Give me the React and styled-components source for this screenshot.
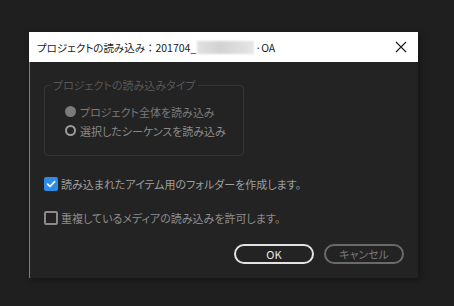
import React from "react";
import styled, { createGlobalStyle } from "styled-components";

const GlobalStyle = createGlobalStyle`
  html, body {
    margin: 0;
    padding: 0;
    background: #1f1f1f;
  }
  body {
    font-family: "Noto Sans CJK JP", "Noto Sans", sans-serif;
    font-feature-settings: "palt";
  }
`;

function CloseIcon() {
  return (
    <svg width="12" height="12" viewBox="0 0 12 12">
      <path d="M1 1 L11 11 M11 1 L1 11" stroke="#1b1b1b" strokeWidth="1.1" fill="none" />
    </svg>
  );
}

function CheckIcon() {
  return (
    <svg width="10" height="10" viewBox="0 0 10 10">
      <path d="M1.6 5.2 L4 7.5 L8.6 2.6" stroke="#fff" strokeWidth="1.7" fill="none" strokeLinecap="round" strokeLinejoin="round" />
    </svg>
  );
}

export default function App() {
  return (
    <Page>
      <GlobalStyle />
      <Dialog>
        <TitleBar>
          <Title>
            プロジェクトの読み込み<Colon>：</Colon>201704_
            <Redacted />
            ·OA
          </Title>
          <CloseButton>
            <CloseIcon />
          </CloseButton>
        </TitleBar>

        <Body>
          <Group>
            <Legend>プロジェクトの読み込みタイプ</Legend>
            <RadioList>
              <RadioRow>
                <Radio filled />
                <RadioLabel>プロジェクト全体を読み込み</RadioLabel>
              </RadioRow>
              <RadioRow>
                <Radio />
                <RadioLabel light>選択したシーケンスを読み込み</RadioLabel>
              </RadioRow>
            </RadioList>
          </Group>

          <CheckRow>
            <Checkbox checked>
              <CheckIcon />
            </Checkbox>
            <CheckLabel>読み込まれたアイテム用のフォルダーを作成します。</CheckLabel>
          </CheckRow>
          <CheckRow second>
            <Checkbox />
            <CheckLabel dim>重複しているメディアの読み込みを許可します。</CheckLabel>
          </CheckRow>

          <Buttons>
            <Button primary>OK</Button>
            <Button>キャンセル</Button>
          </Buttons>
        </Body>
      </Dialog>
    </Page>
  );
}

const Page = styled.div`
  width: 454px;
  height: 306px;
  padding: 32px 0 0 29px;
  box-sizing: border-box;
`;

const Dialog = styled.div`
  width: 389px;
  display: flex;
  flex-direction: column;
  box-shadow: 2px 2px 6px rgba(0, 0, 0, 0.35);
`;

const TitleBar = styled.div`
  height: 30px;
  background: #ffffff;
  display: flex;
  align-items: center;
  justify-content: space-between;
  padding: 0 10px 0 8px;
`;

const Title = styled.div`
  font-size: 10.5px;
  color: #1b1b1b;
  display: flex;
  align-items: center;
  white-space: nowrap;
`;

const Colon = styled.span`
  font-feature-settings: normal;
`;

const Redacted = styled.span`
  display: inline-block;
  width: 57px;
  height: 13px;
  margin: 0 1px;
  background: linear-gradient(90deg, #e2e2e2, #d2d2d2 40%, #dcdcdc 70%, #e6e6e6);
  filter: blur(1.2px);
`;

const CloseButton = styled.div`
  display: flex;
  align-items: center;
  justify-content: center;
  width: 14px;
  height: 14px;
`;

const Body = styled.div`
  background: #232323;
  border-left: 1px solid #7c7c7c;
  padding: 16px 14px 14px 14px;
  display: flex;
  flex-direction: column;
`;

const Group = styled.fieldset`
  width: 200px;
  height: 78px;
  box-sizing: border-box;
  margin: 0;
  padding: 0;
  border: 1px solid #363636;
  border-radius: 4px;
`;

const Legend = styled.legend`
  font-size: 11px;
  line-height: 14px;
  color: #575757;
  padding: 0 2px;
  margin-left: 6px;
`;

const RadioList = styled.div`
  padding: 10px 0 0 20px;
  display: flex;
  flex-direction: column;
`;

const RadioRow = styled.div`
  height: 19px;
  display: flex;
  align-items: center;
`;

const Radio = styled.span`
  width: 11px;
  height: 11px;
  border-radius: 50%;
  box-sizing: border-box;
  background: ${(p) => (p.filled ? "#7b7b7b" : "transparent")};
  border: 2px solid ${(p) => (p.filled ? "#7b7b7b" : "#9c9c9c")};
  margin-right: 4px;
  flex: none;
`;

const RadioLabel = styled.span`
  font-size: 11px;
  color: ${(p) => (p.light ? "#8a8a8a" : "#7a7a7a")};
  white-space: nowrap;
`;

const CheckRow = styled.div`
  height: 19px;
  display: flex;
  align-items: center;
  margin-top: ${(p) => (p.second ? "15px" : "18px")};
`;

const Checkbox = styled.span`
  width: 14px;
  height: 14px;
  box-sizing: border-box;
  border-radius: 2px;
  flex: none;
  margin-right: 3px;
  display: flex;
  align-items: center;
  justify-content: center;
  background: ${(p) => (p.checked ? "#2e8ce8" : "transparent")};
  border: ${(p) => (p.checked ? "none" : "2px solid #8a8a8a")};
`;

const CheckLabel = styled.span`
  font-size: 11px;
  color: ${(p) => (p.dim ? "#8e8e8e" : "#9e9e9e")};
  white-space: nowrap;
`;

const Buttons = styled.div`
  display: flex;
  justify-content: flex-end;
  gap: 10px;
  margin-top: 17px;
`;

const Button = styled.div`
  width: 80px;
  height: 20px;
  box-sizing: border-box;
  border-radius: 10px;
  border: 2px solid ${(p) => (p.primary ? "#e2e2e2" : "#6a6a6a")};
  color: ${(p) => (p.primary ? "#e6e6e6" : "#787878")};
  font-size: 11px;
  display: flex;
  align-items: center;
  justify-content: center;
`;
